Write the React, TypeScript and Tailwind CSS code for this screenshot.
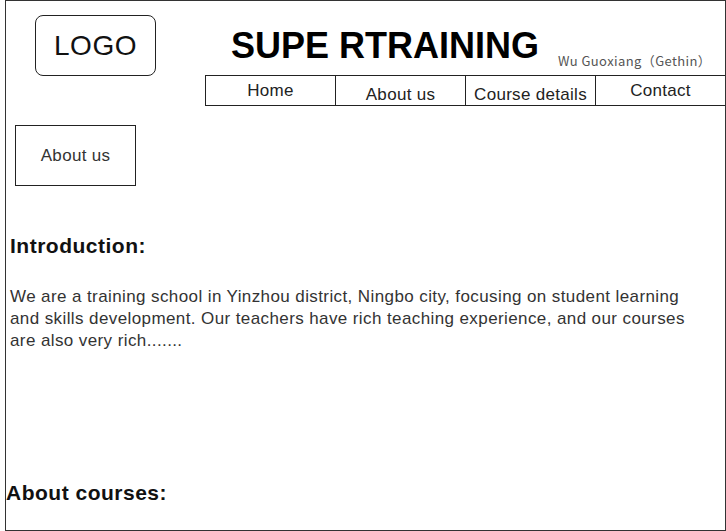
import React from "react";

const navItems: { label: string; shift: boolean }[] = [
  { label: "Home", shift: false },
  { label: "About us", shift: true },
  { label: "Course details", shift: true },
  { label: "Contact", shift: false },
];

export default function App() {
  return (
    <div
      className="w-[726px] h-[531px] bg-white overflow-hidden"
      style={{ fontFamily: '"Liberation Sans", Arial, sans-serif' }}
    >
      <div className="ml-[5px] w-[721px] h-[531px] border border-[#333] flex flex-col">
        {/* Header */}
        <div className="flex">
          <div className="ml-[29px] mt-[14px] w-[121px] h-[61px] border border-[#222] rounded-[8px] flex items-center justify-center text-[28px] tracking-[0.5px] text-[#111]">
            LOGO
          </div>
          <div className="ml-[49px] flex flex-col w-[520px]">
            <div className="h-[74px] flex items-start pl-[26px]">
              <div className="mt-[27px] text-[36px] leading-[36px] font-bold text-black whitespace-nowrap">
                SUPE RTRAINING
              </div>
              <div
                className="mt-[53px] ml-[19px] text-[13px] leading-[13px] tracking-[0.4px] text-[#555] whitespace-nowrap"
                style={{ fontFamily: '"Noto Sans CJK SC", "Noto Sans", sans-serif' }}
              >
                Wu Guoxiang（Gethin）
              </div>
            </div>
            <div className="flex">
              {navItems.map((n) => (
                <div
                  key={n.label}
                  className="w-[130px] h-[31px] border-l border-y border-[#222] flex justify-center text-[17px] tracking-[0.3px] text-[#222] whitespace-nowrap"
                >
                  <span className={n.shift ? "mt-[9px] leading-[20px]" : "mt-[5px] leading-[20px]"}>
                    {n.label}
                  </span>
                </div>
              ))}
            </div>
          </div>
        </div>

        {/* About us box */}
        <div className="ml-[9px] mt-[19px] w-[121px] h-[61px] border border-[#222] flex items-center justify-center text-[17px] tracking-[0.3px] text-[#333]">
          About us
        </div>

        {/* Introduction */}
        <h2 className="ml-[4px] mt-[48px] text-[21px] leading-[24px] font-bold tracking-[0.5px] text-[#111]">
          Introduction:
        </h2>
        <p className="ml-[4px] mt-[28px] w-[700px] text-[17px] leading-[22px] tracking-[0.4px] text-[#333]">
          We are a training school in Yinzhou district, Ningbo city, focusing on student learning and skills
          development. Our teachers have rich teaching experience, and our courses are also very rich.......
        </p>

        <h2 className="ml-0 mt-[129px] text-[21px] leading-[24px] font-bold tracking-[0.5px] text-[#111]">
          About courses:
        </h2>
      </div>
    </div>
  );
}
